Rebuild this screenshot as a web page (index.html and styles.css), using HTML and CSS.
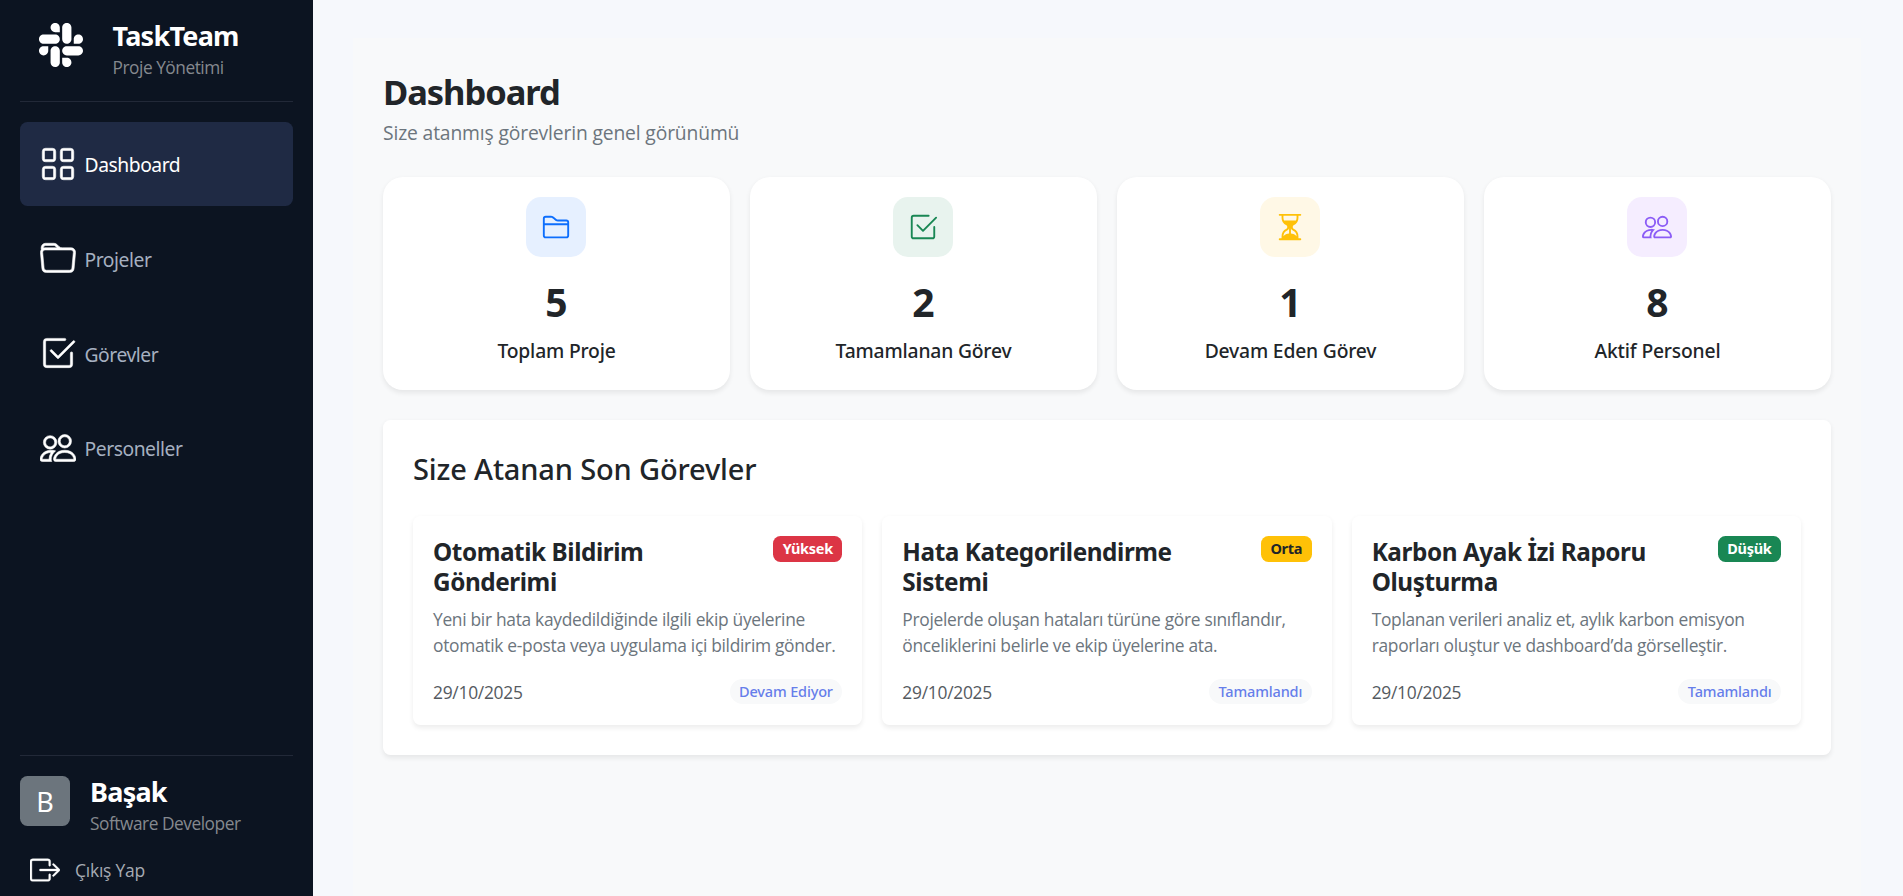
FILE: index.html
```html
<!DOCTYPE html>
<html lang="tr">
<head>
<meta charset="utf-8">
<title>TaskTeam</title>
<link rel="stylesheet" href="styles.css">
</head>
<body>
<svg class="sprite" aria-hidden="true">
  <symbol id="slack" viewBox="0 0 16 16"><path d="M3.362 10.11c0 .926-.756 1.681-1.681 1.681S0 11.036 0 10.111.756 8.43 1.68 8.43h1.682zm.846 0c0-.924.756-1.68 1.681-1.68s1.681.756 1.681 1.68v4.21c0 .924-.756 1.68-1.68 1.68a1.685 1.685 0 0 1-1.682-1.68zM5.89 3.362c-.926 0-1.682-.756-1.682-1.681S4.964 0 5.89 0s1.68.756 1.68 1.68v1.682zm0 .846c.924 0 1.68.756 1.68 1.681S6.814 7.57 5.89 7.57H1.68C.757 7.57 0 6.814 0 5.89c0-.926.756-1.682 1.68-1.682zm6.749 1.682c0-.926.755-1.682 1.68-1.682S16 4.964 16 5.889s-.756 1.681-1.68 1.681h-1.681zm-.848 0c0 .924-.755 1.68-1.68 1.68A1.685 1.685 0 0 1 8.43 5.89V1.68C8.43.757 9.186 0 10.11 0c.926 0 1.681.756 1.681 1.68zm-1.681 6.748c.926 0 1.682.756 1.682 1.681S11.036 16 10.11 16s-1.681-.756-1.681-1.68v-1.682h1.68zm0-.847c-.924 0-1.68-.755-1.68-1.68s.756-1.681 1.68-1.681h4.21c.924 0 1.68.756 1.68 1.68 0 .926-.756 1.681-1.68 1.681z"/></symbol>
  <symbol id="grid" viewBox="0 0 16 16"><path d="M1 2.5A1.5 1.5 0 0 1 2.5 1h3A1.5 1.5 0 0 1 7 2.5v3A1.5 1.5 0 0 1 5.5 7h-3A1.5 1.5 0 0 1 1 5.5zM2.5 2a.5.5 0 0 0-.5.5v3a.5.5 0 0 0 .5.5h3a.5.5 0 0 0 .5-.5v-3a.5.5 0 0 0-.5-.5zm6.500.5A1.500 1.500 0 0 1 10.500 1h3A1.500 1.500 0 0 1 15 2.500v3A1.500 1.500 0 0 1 13.500 7h-3A1.500 1.500 0 0 1 9 5.500zm1.500-.5a.5.5 0 0 0-.5.5v3a.5.5 0 0 0 .5.5h3a.5.5 0 0 0 .5-.5v-3a.5.5 0 0 0-.5-.5zM1 10.500A1.500 1.500 0 0 1 2.500 9h3A1.500 1.500 0 0 1 7 10.500v3A1.500 1.500 0 0 1 5.500 15h-3A1.500 1.500 0 0 1 1 13.500zm1.500-.5a.5.5 0 0 0-.5.5v3a.5.5 0 0 0 .5.5h3a.5.5 0 0 0 .5-.5v-3a.5.5 0 0 0-.5-.5zm6.500.5A1.500 1.500 0 0 1 10.500 9h3a1.500 1.500 0 0 1 1.500 1.500v3a1.500 1.500 0 0 1-1.500 1.500h-3A1.500 1.500 0 0 1 9 13.500zm1.500-.5a.5.5 0 0 0-.5.5v3a.5.5 0 0 0 .5.5h3a.5.5 0 0 0 .5-.5v-3a.5.5 0 0 0-.5-.5z"/></symbol>
  <symbol id="folder" viewBox="0 0 16 16"><path d="M.54 3.87.5 3a2 2 0 0 1 2-2h3.672a2 2 0 0 1 1.414.586l.828.828A2 2 0 0 0 9.828 3h3.982a2 2 0 0 1 1.992 2.181l-.637 7A2 2 0 0 1 13.174 14H2.826a2 2 0 0 1-1.991-1.819l-.637-7a2 2 0 0 1 .342-1.310zM2.190 4a1 1 0 0 0-.996 1.090l.637 7a1 1 0 0 0 .995.910h10.348a1 1 0 0 0 .995-.910l.637-7A1 1 0 0 0 13.810 4zm4.690-1.707A1 1 0 0 0 6.172 2H2.500a1 1 0 0 0-1 .981l.006.139q.323-.119.684-.120h5.396z"/></symbol>
  <symbol id="folder2" viewBox="0 0 16 16"><path d="M1 3.500A1.500 1.500 0 0 1 2.500 2h2.764c.958 0 1.760.560 2.311 1.184C7.985 3.648 8.480 4 9 4h4.500A1.500 1.500 0 0 1 15 5.500v7a1.500 1.500 0 0 1-1.500 1.500h-11A1.500 1.500 0 0 1 1 12.500zM2.500 3a.5.5 0 0 0-.5.5V6h12v-.5a.5.5 0 0 0-.5-.5H9c-.964 0-1.710-.629-2.174-1.154C6.374 3.334 5.820 3 5.264 3zM14 7H2v5.500a.5.5 0 0 0 .5.5h11a.5.5 0 0 0 .5-.5z"/></symbol>
  <symbol id="check" viewBox="0 0 16 16"><path d="M3 14.500A1.500 1.500 0 0 1 1.500 13V3A1.500 1.500 0 0 1 3 1.500h8a.5.5 0 0 1 0 1H3a.5.5 0 0 0-.5.5v10a.5.5 0 0 0 .5.5h10a.5.5 0 0 0 .5-.5V8a.5.5 0 0 1 1 0v5a1.500 1.500 0 0 1-1.500 1.500z"/><path d="m8.354 10.354 7-7a.5.5 0 0 0-.708-.708L8 9.293 5.354 6.646a.5.5 0 1 0-.708.708l3 3a.5.5 0 0 0 .708 0"/></symbol>
  <symbol id="people" viewBox="0 0 16 16"><path d="M15 14s1 0 1-1-1-4-5-4-5 3-5 4 1 1 1 1zm-7.978-1L7 12.996c.001-.264.167-1.030.760-1.720C8.312 10.629 9.282 10 11 10c1.717 0 2.687.630 3.240 1.276.593.690.758 1.457.760 1.720l-.008.002-.014.002zM11 7a2 2 0 1 0 0-4 2 2 0 0 0 0 4m3-2a3 3 0 1 1-6 0 3 3 0 0 1 6 0M6.936 9.280a6 6 0 0 0-1.230-.247A7 7 0 0 0 5 9c-4 0-5 3-5 4q0 1 1 1h4.216A2.240 2.240 0 0 1 5 13c0-1.010.377-2.042 1.090-2.904.243-.294.526-.569.846-.816M4.920 10A5.500 5.500 0 0 0 4 13H1c0-.260.164-1.030.760-1.724.545-.636 1.492-1.256 3.160-1.276M1.500 5.500a3 3 0 1 1 6 0 3 3 0 0 1-6 0m3-2a2 2 0 1 0 0 4 2 2 0 0 0 0-4"/></symbol>
  <symbol id="hourglass" viewBox="0 0 16 16"><path d="M2.500 15a.5.5 0 1 1 0-1h1v-1a4.500 4.500 0 0 1 2.557-4.060c.290-.139.443-.377.443-.590v-.700c0-.213-.154-.451-.443-.590A4.500 4.500 0 0 1 3.500 3V2h-1a.5.5 0 0 1 0-1h11a.5.5 0 0 1 0 1h-1v1a4.500 4.500 0 0 1-2.557 4.060c-.290.139-.443.377-.443.590v.700c0 .213.154.451.443.590A4.500 4.500 0 0 1 12.500 13v1h1a.5.5 0 0 1 0 1zm2-13v1c0 .537.120 1.045.337 1.500h6.326c.216-.455.337-.963.337-1.500V2zm3 6.350c0 .701-.478 1.236-1.011 1.492A3.500 3.500 0 0 0 4.500 13s.866-1.299 3-1.480zm1 0v3.170c2.134.181 3 1.480 3 1.480a3.500 3.500 0 0 0-1.989-3.158C8.978 9.586 8.500 9.052 8.500 8.351z"/></symbol>
  <symbol id="logout" viewBox="0 0 16 16"><path d="M10 12.500a.5.5 0 0 1-.5.5h-8a.5.5 0 0 1-.5-.5v-9a.5.5 0 0 1 .5-.5h8a.5.5 0 0 1 .5.5v2a.5.5 0 0 0 1 0v-2A1.500 1.500 0 0 0 9.500 2h-8A1.500 1.500 0 0 0 0 3.500v9A1.500 1.500 0 0 0 1.500 14h8a1.500 1.500 0 0 0 1.500-1.500v-2a.5.5 0 0 0-1 0z"/><path d="M15.854 8.354a.5.5 0 0 0 0-.708l-3-3a.5.5 0 0 0-.708.708L14.293 7.500H5.500a.5.5 0 0 0 0 1h8.793l-2.147 2.146a.5.5 0 0 0 .708.708z"/></symbol>
</svg>
<div class="app">
  <aside class="sidebar">
    <div class="brand">
      <svg class="brand-logo"><use href="#slack"/></svg>
      <div>
        <div class="brand-name">TaskTeam</div>
        <div class="brand-sub">Proje Yönetimi</div>
      </div>
    </div>
    <nav class="nav">
      <a class="nav-item active"><svg class="nav-icon"><use href="#grid"/></svg><span>Dashboard</span></a>
      <a class="nav-item"><svg class="nav-icon"><use href="#folder"/></svg><span>Projeler</span></a>
      <a class="nav-item"><svg class="nav-icon"><use href="#check"/></svg><span>Görevler</span></a>
      <a class="nav-item"><svg class="nav-icon"><use href="#people"/></svg><span>Personeller</span></a>
    </nav>
    <div class="account">
      <div class="user">
        <div class="avatar">B</div>
        <div>
          <div class="user-name">Başak</div>
          <div class="user-role">Software Developer</div>
        </div>
      </div>
      <a class="logout"><svg class="logout-icon"><use href="#logout"/></svg><span>Çıkış Yap</span></a>
    </div>
  </aside>
  <main class="main">
    <div class="content">
      <h1 class="title">Dashboard</h1>
      <p class="subtitle">Size atanmış görevlerin genel görünümü</p>
      <div class="stats">
        <div class="stat"><div class="stat-icon blue"><svg><use href="#folder2"/></svg></div><div class="stat-num">5</div><div class="stat-label">Toplam Proje</div></div>
        <div class="stat"><div class="stat-icon green"><svg><use href="#check"/></svg></div><div class="stat-num">2</div><div class="stat-label">Tamamlanan Görev</div></div>
        <div class="stat"><div class="stat-icon yellow"><svg><use href="#hourglass"/></svg></div><div class="stat-num">1</div><div class="stat-label">Devam Eden Görev</div></div>
        <div class="stat"><div class="stat-icon purple"><svg><use href="#people"/></svg></div><div class="stat-num">8</div><div class="stat-label">Aktif Personel</div></div>
      </div>
      <section class="panel">
        <h2 class="panel-title">Size Atanan Son Görevler</h2>
        <div class="tasks">
          <article class="task">
            <div class="task-head"><h3 class="task-title">Otomatik Bildirim<br>Gönderimi</h3><span class="badge high">Yüksek</span></div>
            <p class="task-desc">Yeni bir hata kaydedildiğinde ilgili ekip üyelerine<br>otomatik e-posta veya uygulama içi bildirim gönder.</p>
            <div class="task-foot"><span class="date">29/10/2025</span><span class="status">Devam Ediyor</span></div>
          </article>
          <article class="task">
            <div class="task-head"><h3 class="task-title">Hata Kategorilendirme<br>Sistemi</h3><span class="badge medium">Orta</span></div>
            <p class="task-desc">Projelerde oluşan hataları türüne göre sınıflandır,<br>önceliklerini belirle ve ekip üyelerine ata.</p>
            <div class="task-foot"><span class="date">29/10/2025</span><span class="status">Tamamlandı</span></div>
          </article>
          <article class="task">
            <div class="task-head"><h3 class="task-title">Karbon Ayak İzi Raporu<br>Oluşturma</h3><span class="badge low">Düşük</span></div>
            <p class="task-desc">Toplanan verileri analiz et, aylık karbon emisyon<br>raporları oluştur ve dashboard’da görselleştir.</p>
            <div class="task-foot"><span class="date">29/10/2025</span><span class="status">Tamamlandı</span></div>
          </article>
        </div>
      </section>
    </div>
  </main>
</div>
</body>
</html>
```
FILE: styles.css
```css
* { box-sizing: border-box; margin: 0; }
body {
  font-family: "Noto Sans", "Open Sans", sans-serif;
  color: #212529;
  background: #f6f8fc;
  overflow: hidden;
}
svg { display: block; fill: currentColor; flex: none; }
.sprite { display: none; }
.app { display: flex; height: 896px; }

.sidebar {
  width: 313px;
  flex: none;
  padding: 18px 20px 11px;
  display: flex;
  flex-direction: column;
  background: #0c1421;
  color: #fff;
}
.brand {
  display: flex;
  gap: 29.5px;
  height: 84px;
  padding-left: 19px;
  border-bottom: 1px solid #222938;
}
.brand-logo { width: 44px; height: 44px; margin-top: 5px; }
.brand-name, .user-name {
  font-size: 27px;
  font-weight: 700;
  line-height: 35px;
  letter-spacing: -0.75px;
  white-space: nowrap;
}
.brand-sub, .user-role {
  margin-top: 1px;
  font-family: "Open Sans", "Noto Sans", sans-serif;
  font-size: 17.3px;
  line-height: 27px;
  letter-spacing: -0.46px;
  color: #85898f;
  white-space: nowrap;
}
.nav { display: flex; flex-direction: column; gap: 10.5px; margin-top: 20px; }
.nav-item {
  display: flex;
  align-items: center;
  gap: 9px;
  height: 84px;
  padding-left: 19.5px;
  border-radius: 7.5px;
  font-size: 19.3px;
  letter-spacing: -0.45px;
  color: #a6b0c0;
}
.nav-item span { padding-top: 2px; }
.nav-item.active { background: #1f2a44; color: #fff; }
.nav-item.active span { padding-top: 1px; }
.nav-icon { width: 36px; height: 36px; color: #fff; stroke: #fff; stroke-width: 0.25; }
.account { margin-top: auto; border-top: 1px solid #222938; padding-top: 20px; }
.user { display: flex; height: 50px; gap: 20px; }
.user-name { margin-top: -2px; }
.user-role { margin-top: 1px; }
.avatar {
  width: 50px;
  height: 50px;
  border-radius: 7.5px;
  background: #6c757d;
  font-size: 27px;
  line-height: 52px;
  text-align: center;
}
.logout {
  display: flex;
  align-items: center;
  height: 30px;
  gap: 15px;
  margin-top: 29px;
  padding-left: 10px;
  font-family: "Open Sans", "Noto Sans", sans-serif;
  font-size: 17.5px;
  line-height: 24px;
  letter-spacing: -0.25px;
  color: #a6abb3;
}
.logout-icon { width: 30px; height: 30px; color: #fff; stroke: #fff; stroke-width: 0.2; }

.main { flex: 1; padding: 38px 42px 0 40px; }
.content { height: 858px; padding: 30px; background: #f8f9fa; }
.title { font-size: 34.5px; line-height: 48px; letter-spacing: -1.05px; }
.subtitle {
  margin-top: 2px;
  font-family: "Open Sans", "Noto Sans", sans-serif;
  font-size: 19.3px;
  line-height: 30px;
  letter-spacing: -0.15px;
  color: #6c757d;
}
.stats { display: grid; grid-template-columns: repeat(4, 1fr); gap: 20px; margin-top: 29px; }
.stat {
  height: 213px;
  padding-top: 20px;
  border-radius: 20px;
  background: #fff;
  text-align: center;
  box-shadow: 0 2.5px 5px rgba(0, 0, 0, 0.075);
}
.stat-icon {
  display: grid;
  place-items: center;
  width: 60px;
  height: 60px;
  margin: 0 auto 0 143px;
  border-radius: 15px;
}
.stat-icon svg { width: 30px; height: 30px; }
.blue { background: #e6f0ff; color: #0d6efd; }
.green { background: #e8f3ee; color: #198754; }
.yellow { background: #fff8e6; color: #ffc107; }
.purple { background: #f5edff; color: #8b5cf6; }
.stat-num { margin-top: 21px; font-size: 39px; font-weight: 700; line-height: 48px; }
.stat-label { margin-top: 10px; font-size: 19.3px; font-weight: 500; line-height: 30px; letter-spacing: -0.18px; }

.panel {
  margin-top: 30px;
  padding: 30px;
  border-radius: 7.5px;
  background: #fff;
  box-shadow: 0 2.5px 5px rgba(0, 0, 0, 0.075);
}
.panel-title { font-size: 29px; font-weight: 500; line-height: 37px; letter-spacing: -0.15px; }
.tasks { display: grid; grid-template-columns: repeat(3, 1fr); gap: 20px; margin-top: 29px; }
.task {
  height: 209px;
  padding: 20px;
  border-radius: 7.5px;
  box-shadow: 0 2.5px 5px rgba(0, 0, 0, 0.075);
}
.task-head { display: flex; justify-content: space-between; align-items: flex-start; }
.task-title { padding-top: 1px; font-size: 24.3px; line-height: 30px; letter-spacing: -0.42px; white-space: nowrap; }
.badge {
  height: 26px;
  padding: 0 9.5px;
  border-radius: 7.5px;
  font-size: 14.5px;
  font-weight: 700;
  line-height: 25px;
  letter-spacing: -0.3px;
  color: #fff;
}
.high { background: #dc3545; }
.medium { background: #ffc107; color: #212529; }
.low { background: #198754; }
.task-desc {
  margin-top: 9px;
  font-family: "Open Sans", "Noto Sans", sans-serif;
  font-size: 17.4px;
  line-height: 26px;
  letter-spacing: -0.31px;
  color: #6c757d;
  white-space: nowrap;
}
.task-foot { display: flex; justify-content: space-between; align-items: center; margin-top: 21px; }
.date {
  height: 25px;
  font-family: "Open Sans", "Noto Sans", sans-serif;
  font-size: 17.4px;
  line-height: 27px;
  letter-spacing: -0.27px;
  color: #555a5f;
}
.status {
  height: 25px;
  padding: 0 9.5px;
  border-radius: 13px;
  background: #f8f9fa;
  font-size: 14.5px;
  font-weight: 500;
  line-height: 25px;
  letter-spacing: -0.16px;
  color: #667eea;
}
```
